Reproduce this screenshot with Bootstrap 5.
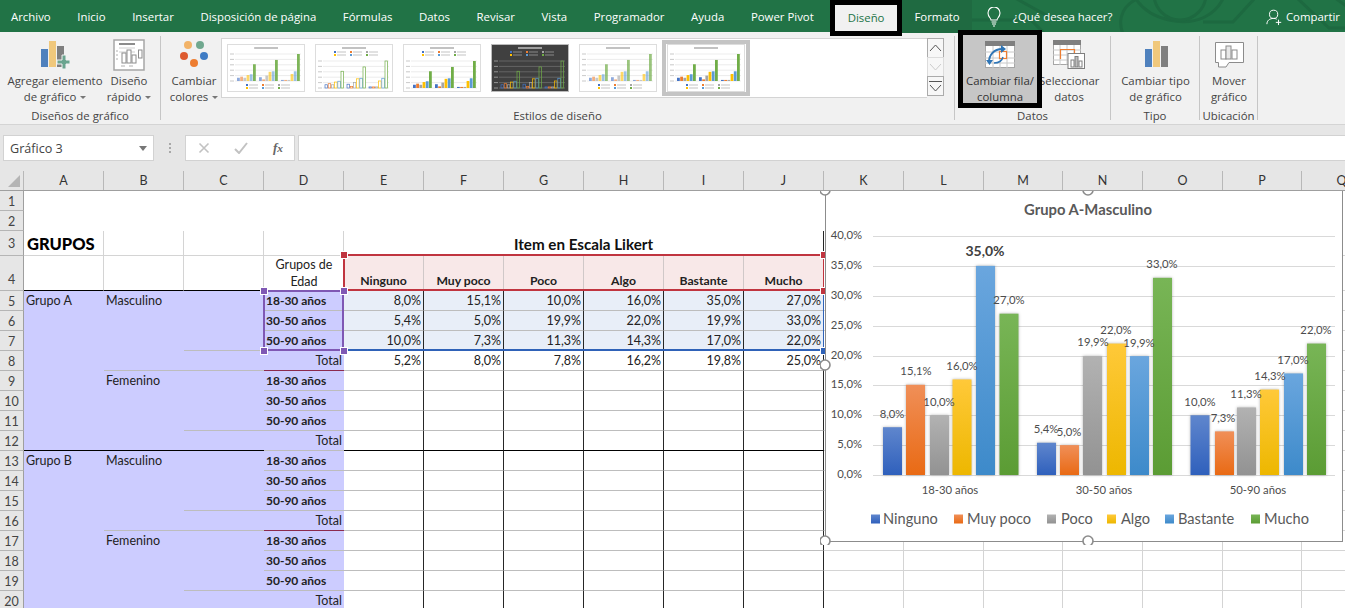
<!DOCTYPE html>
<html lang="es">
<head>
<meta charset="utf-8">
<title>Excel - Grupo A-Masculino</title>
<link rel="stylesheet" href="https://cdn.jsdelivr.net/npm/bootstrap@5.3.0/dist/css/bootstrap.min.css">
<style>
    html, body { height: 608px; overflow: hidden; background: #fff; }
    body { font-family: "Open Sans", "Liberation Sans", sans-serif; font-size: 11.4px; color: #333; }

    /* tabs */
    .xl-tabs { height: 32px; background: #217346; color: #fff; position: relative; padding-left: 0; }
    .xl-tabs > span { position: relative; }
    .xl-tab { padding: 0 13.3px; line-height: 33px; white-space: nowrap; }
    .xl-tab-first { padding-left: 11px; }
    .xl-tab-design { width: 72px; height: 36px; margin-left: 3px; border: 5px solid #000; background: #f1f1f1; color: #217346; text-align: center; line-height: 26px; z-index: 3; margin-bottom: -4px; align-self: flex-start; }
    .xl-tab-format { width: 70px; line-height: 33px; text-align: center; background: #1f6a41; }
    .xl-circuit { position: absolute; left: 895px; top: 0; }
    .xl-tell { margin-left: 15px; gap: 12px; line-height: 33px; }
    .xl-share { margin-left: auto; padding-right: 5px; gap: 3px; line-height: 33px; }

    /* ribbon */
    .xl-ribbon { height: 93px; background: #f1f1f1; border-bottom: 1px solid #d4d4d4; }
    .rb-group { height: 84px; margin-top: 4px; border-right: 1px solid #c6c6c6; flex: none; }
    .rb-items { height: 72px; }
    .rb-label { line-height: 16px; text-align: center; color: #444; white-space: nowrap; }
    .rb-btn { flex: none; text-align: center; line-height: 16px; color: #444; white-space: nowrap; }
    .rb-icon { height: 37px; display: flex; align-items: center; justify-content: center; }
    .rb-caret { display: inline-block; margin-left: 4px; vertical-align: 2px; border: 3px solid transparent; border-top-color: #777; border-bottom-width: 0; }
    .rb-g1 { width: 161px; } .rb-g2 { width: 794px; } .rb-g3 { width: 156px; } .rb-g4 { width: 89px; } .rb-g5 { width: 58px; }
    .rb-w-add { width: 100px; margin-left: 5px; }
    .rb-w-quick { width: 48px; }
    .rb-w-colors { width: 54px; margin-left: 6px; }
    .rb-active { width: 84px; height: 78px; margin: -6px 0 0 3px; border: 5px solid #000; background: #c6c6c6; padding-top: 1px; position: relative; z-index: 2; color: #333; overflow: hidden; }
    .rb-w-select { width: 60px; margin-left: -3px; }
    .rb-w-type { width: 89px; }
    .rb-w-move { width: 58px; }

    .rb-gallery { width: 706px; height: 60px; margin-top: 2px; background: #fff; border: 1px solid #d4d4d4; border-right: 0; padding: 5px 0 0 5px; gap: 10px; position: relative; }
    .rb-thumb { width: 78px; height: 48px; display: block; flex: none; }
    .rb-thumb-on { position: absolute; left: 440px; top: 1px; width: 88px; height: 56px; border: 4px solid #c4c4c4; background: #fff; padding: 0 1px; }
    .rb-spin { margin-top: 2px; width: 17px; }
    .rb-spin span { height: 20px; background: #f7f7f7; border: 1px solid #ababab; display: flex; align-items: center; justify-content: center; margin-bottom: -1px; }
    .rb-spin span.rb-off { border-color: #dcdcdc; }

    /* formula bar */
    .xl-formula { height: 46px; background: #e6e6e6; padding: 10px 0 0 3px; }
    .fx-name { width: 151px; height: 26px; background: #fff; border: 1px solid #d2d2d2; padding: 1px 6px 0; line-height: 24px; font-size: 12.6px; color: #444; }
    .fx-dots { width: 31px; gap: 2px; }
    .fx-dots i { width: 2px; height: 2px; background: #a8a8a8; display: block; }
    .fx-btns { width: 110px; height: 26px; background: #fff; border: 1px solid #d2d2d2; padding: 0 11px 0 12px; }
    .fx-fx { font-family: "Liberation Serif", serif; font-style: italic; font-weight: 700; font-size: 13px; color: #666; }
    .fx-input { margin-left: 3px; flex: 1; height: 26px; background: #fff; border: 1px solid #d2d2d2; border-right: 0; }

    /* sheet */
    .sh-head { height: 20px; background: #e6e6e6; border-bottom: 1px solid #9f9f9f; font-family: Lato, "Liberation Sans", sans-serif; font-size: 12.5px; color: #333; width: 1382px; }
    .sh-corner { width: 24px; flex: none; border-right: 1px solid #b8b8b8; position: relative; }
    .sh-corner i { position: absolute; left: 8px; top: 4px; border-style: solid; border-width: 0 0 12px 12px; border-color: transparent transparent #b5b5b5 transparent; }
    .sh-col { width: 80px; flex: none; text-align: center; border-right: 1px solid #b8b8b8; line-height: 19px; }
    .sh-narrow { width: 79px; }

    .sh-body { position: relative; height: 417px; overflow: hidden; font-family: Lato, "Liberation Sans", sans-serif; font-size: 12.5px; color: #222; }
    .sh-grid { table-layout: fixed; border-collapse: separate; border-spacing: 0; width: 1382px; }
    .sh-grid td { height: 20px; padding: 0 2px; white-space: nowrap; overflow: hidden; line-height: 16px; vertical-align: middle; }
    .sh-grid .sr3 td { height: 25px; }
    .sh-grid .sr4 td { height: 35px; vertical-align: bottom; }
    .sh-grid td.rw { background: #e6e6e6; border-right: 1px solid #9f9f9f; border-bottom: 1px solid #b5b5b5; text-align: center; color: #444; padding: 2px 0 0; line-height: 16px; }
    .sh-grid .sr4 td.rw { padding-bottom: 2px; }
    .c-g { border-right: 1px solid #d4d4d4; border-bottom: 1px solid #d4d4d4; }
    .c-gv { border-right: 1px solid #d4d4d4; }
    .c-bk { border-bottom: 1px solid #000; }
    .c-lil { background: #ccccff; }
    .c-line { border-bottom: 1px solid #bdbdbd; }
    .c-red { border-bottom: 1px solid #8c2a4e; }
    .c-num { text-align: right; border-right: 1px solid #262626; }
    .c-nl { border-bottom: 1px solid #bdbdbd; }
    .c-blue { background: #e8eef8; }
    .c-head { background: #f8e8e8; border-right: 1px solid #d0c8c8; text-align: center; font-weight: 700; font-size: 12.2px; padding-bottom: 2px !important; }
    .c-title { font-size: 15.2px; font-weight: 700; text-align: center; color: #111; border-right: 1px solid #262626; }
    .c-big { font-size: 16.5px; font-weight: 900; color: #000; line-height: 22px !important; padding: 1px 0 0 3px !important; }
    .c-wrap { white-space: normal !important; text-align: center; line-height: 17px !important; font-size: 12.5px; }
    .c-bold { font-weight: 700; font-size: 12px; }
    .c-right { text-align: right; }

    /* range markers and chart float over the cells */
    .rg { position: absolute; }
    .rg-red { left: 343px; top: 63px; width: 481px; height: 37px; border: 2px solid #c0343f; border-right-width: 1px; }
    .rg-blue { left: 343px; top: 99px; width: 481px; height: 61px; border-bottom: 2px solid #2f62b8; border-right: 1px solid #2f62b8; }
    .rg-purple { left: 263px; top: 99px; width: 81px; height: 61px; border: 2px solid #7f58b4; }
    .hd { position: absolute; width: 6px; height: 6px; outline: 1px solid #fff; }
    .hd-r { background: #c0343f; }
    .hd-b { background: #2f62b8; }
    .hd-p { background: #7f58b4; }
    .hd-1 { left: 341px; top: 61px; } .hd-2 { left: 821px; top: 61px; }
    .hd-3 { left: 821px; top: 97px; } .hd-4 { left: 341px; top: 97px; }
    .hd-5 { left: 261px; top: 97px; } .hd-6 { left: 261px; top: 157px; }
    .hd-7 { left: 341px; top: 157px; } .hd-8 { left: 821px; top: 157px; }
    .ch-box { position: absolute; left: 820px; top: -6px; display: block; }
    .ch-bar { filter: drop-shadow(0 0 1.5px rgba(0,0,0,.3)); }
    .ch-t { font-family: Lato, "Liberation Sans", sans-serif; font-size: 11.3px; fill: #4c4c4c; }
    .ch-title { font-size: 14.8px; font-weight: 700; fill: #595959; }
    .ch-big { font-size: 14px; font-weight: 700; fill: #404040; }
    .ch-leg { font-size: 14.6px; fill: #595959; }
</style>
</head>
<body>

<!-- Tabs -->
<div class="xl-tabs d-flex align-items-start">
    <svg class="xl-circuit" width="450" height="32" fill="none" stroke="#1d6940" stroke-width="3">
        <path d="M230 38c-8-14-5-30 10-38M330 -6c-8 22-30 32-56 26-18-4-30-14-36-26"/>
        <path d="M40-2l36 22h60l14 14M120 -2l40 22M360-2l-22 24h-30M402-2l32 30h20M440 -2l14 10"/>
        <circle cx="285" cy="-6" r="26"/>
    </svg>
    <span class="xl-tab xl-tab-first">Archivo</span>
    <span class="xl-tab">Inicio</span>
    <span class="xl-tab">Insertar</span>
    <span class="xl-tab">Disposición de página</span>
    <span class="xl-tab">Fórmulas</span>
    <span class="xl-tab">Datos</span>
    <span class="xl-tab">Revisar</span>
    <span class="xl-tab">Vista</span>
    <span class="xl-tab">Programador</span>
    <span class="xl-tab">Ayuda</span>
    <span class="xl-tab">Power Pivot</span>
    <span class="xl-tab-design">Diseño</span>
    <span class="xl-tab-format">Formato</span>
    <span class="xl-tell d-flex align-items-center">
        <svg width="14" height="20" viewBox="0 0 14 20" fill="none" stroke="#fff" stroke-width="1.1"><path d="M4 13c0-2-3-3-3-7a6 6 0 0 1 12 0c0 4-3 5-3 7z"/><path d="M4.5 15h5M5 17h4M6 19h2"/></svg>
        <span>¿Qué desea hacer?</span>
    </span>
    <span class="xl-share d-flex align-items-center">
        <svg width="17" height="18" viewBox="0 0 19 18" fill="none" stroke="#fff" stroke-width="1.1"><circle cx="8.5" cy="6" r="4.6"/><path d="M1 17c0-4 3-6.400 7.500-6.400 1.500 0 2.500.3 3.500.8M11 15h6M14 12v6"/></svg>
        <span>Compartir</span>
    </span>
</div>

<!-- Ribbon -->
<div class="xl-ribbon d-flex">
    <div class="rb-group rb-g1">
        <div class="rb-items d-flex">
            <div class="rb-btn rb-w-add">
                <div class="rb-icon">
                    <svg width="30" height="30" viewBox="0 0 30 30">
                        <rect x="1" y="9" width="7" height="18" fill="#4f81bd"/>
                        <rect x="9" y="1" width="7" height="26" fill="#f0c87c"/>
                        <rect x="17" y="6" width="7" height="21" fill="#7f7f7f"/>
                        <path d="M17 20h5v-5h4v5h4v4h-4v5h-4v-5h-5z" fill="#6ba48f" stroke="#f1f1f1"/>
                    </svg>
                </div>
                Agregar elemento<br>de gráfico<i class="rb-caret"></i>
            </div>
            <div class="rb-btn rb-w-quick">
                <div class="rb-icon">
                    <svg width="32" height="32" viewBox="0 0 32 32" fill="#fff" stroke="#8c8c8c">
                        <rect x="1" y="1" width="30" height="30" stroke="#a6a6a6" stroke-width="1.500"/>
                        <path d="M6 5h16" stroke="#8c8c8c" stroke-width="2"/>
                        <path d="M6 9h16M6 13h16" stroke="#cfcfcf"/>
                        <rect x="9" y="14" width="4" height="10"/><rect x="14" y="11" width="4" height="13"/><rect x="19" y="16" width="4" height="8"/>
                        <rect x="25.500" y="11" width="3.500" height="8"/>
                        <path d="M3 12h2M3 16h2M3 20h2M8 27h4M16 27h4" stroke="#b0b0b0"/>
                    </svg>
                </div>
                Diseño<br>rápido<i class="rb-caret"></i>
            </div>
        </div>
        <div class="rb-label">Diseños de gráfico</div>
    </div>

    <div class="rb-group rb-g2">
        <div class="rb-items d-flex">
            <div class="rb-btn rb-w-colors">
                <div class="rb-icon">
                    <svg width="30" height="30" viewBox="0 0 30 30">
                        <circle cx="9" cy="5" r="4" fill="#f2b368"/>
                        <circle cx="21" cy="5" r="4" fill="#70a88f"/>
                        <circle cx="5" cy="16" r="4" fill="#dd5a2f"/>
                        <circle cx="25" cy="16" r="4" fill="#3f7cc4"/>
                        <circle cx="15" cy="23" r="4" fill="#ed7d31"/>
                    </svg>
                </div>
                Cambiar<br>colores<i class="rb-caret"></i>
            </div>
            <div class="rb-gallery d-flex" id="gallery"></div>
            <div class="rb-spin d-flex flex-column">
                <span><svg width="13" height="8" fill="none" stroke="#555"><path d="M1 7l5.500-6 5.500 6"/></svg></span>
                <span class="rb-off"><svg width="13" height="8" fill="none" stroke="#ccc"><path d="M1 1l5.500 6 5.500-6"/></svg></span>
                <span><svg width="13" height="12" fill="none" stroke="#555"><path d="M0 1.500h13M1 5l5.500 6 5.500-6"/></svg></span>
            </div>
        </div>
        <div class="rb-label">Estilos de diseño</div>
    </div>

    <div class="rb-group rb-g3">
        <div class="rb-items d-flex">
            <div class="rb-btn rb-active">
                <div class="rb-icon">
                    <svg width="30" height="27" viewBox="0 0 30 27">
                        <rect x="0.500" y="0.500" width="29" height="26" fill="#fff" stroke="#a6a6a6"/>
                        <rect x="0" y="0" width="30" height="5" fill="#7f7f7f"/>
                        <path d="M0 11h30M0 17h30M0 22h30M8 5v22M15 5v22M22 5v22" stroke="#c8c8c8"/>
                        <rect x="14.500" y="10.500" width="7" height="7" fill="#fff" stroke="#ed7d31" stroke-width="1.200"/>
                        <path d="M4 21c0-7 5-13 13-13" fill="none" stroke="#2e75b6" stroke-width="2"/>
                        <path d="M16 4l5 4-5 4zM1 19h7l-3.500 5z" fill="#2e75b6"/>
                        <path d="M9 22c4 0 8-2 9-6" fill="none" stroke="#2e75b6" stroke-width="1.500"/>
                    </svg>
                </div>
                Cambiar fila/<br>columna
            </div>
            <div class="rb-btn rb-w-select">
                <div class="rb-icon">
                    <svg width="32" height="29" viewBox="0 0 32 29">
                        <rect x="0.500" y="0.500" width="27" height="24" fill="#fff" stroke="#a6a6a6"/>
                        <rect x="0" y="0" width="28" height="5" fill="#7f7f7f"/>
                        <path d="M0 10h28M0 15h28M0 20h28M7 5v20M14 5v20M21 5v20" stroke="#c8c8c8"/>
                        <path d="M7.500 19V9.500h14V14" fill="none" stroke="#ed7d31" stroke-width="1.200"/>
                        <rect x="15" y="13.500" width="16.500" height="15" fill="#fff" stroke="#7f7f7f"/>
                        <rect x="18" y="20" width="3" height="7" fill="#fff" stroke="#7f7f7f"/><rect x="22" y="16.500" width="3" height="10.500" fill="#bdbdbd" stroke="#7f7f7f"/><rect x="26" y="21" width="3" height="6" fill="#fff" stroke="#7f7f7f"/>
                    </svg>
                </div>
                Seleccionar<br>datos
            </div>
        </div>
        <div class="rb-label">Datos</div>
    </div>

    <div class="rb-group rb-g4">
        <div class="rb-items d-flex">
            <div class="rb-btn rb-w-type">
                <div class="rb-icon">
                    <svg width="24" height="27" viewBox="0 0 24 27">
                        <rect x="1" y="8" width="7" height="18" fill="#4f81bd"/>
                        <rect x="9" y="0" width="7" height="26" fill="#f0c87c"/>
                        <rect x="17" y="5" width="7" height="21" fill="#7f7f7f"/>
                    </svg>
                </div>
                Cambiar tipo<br>de gráfico
            </div>
        </div>
        <div class="rb-label">Tipo</div>
    </div>

    <div class="rb-group rb-g5">
        <div class="rb-items d-flex">
            <div class="rb-btn rb-w-move">
                <div class="rb-icon">
                    <svg width="29" height="26" viewBox="0 0 29 26" fill="#fff" stroke="#8c8c8c">
                        <path d="M.500.500h28v20H14l-3 4.500H3.500v-4.500H.500z"/>
                        <rect x="6" y="8" width="5" height="9"/><rect x="11" y="4" width="5" height="13" fill="#e8e8e8"/><rect x="17" y="8" width="5" height="9"/>
                    </svg>
                </div>
                Mover<br>gráfico
            </div>
        </div>
        <div class="rb-label">Ubicación</div>
    </div>
</div>

<!-- Formula bar -->
<div class="xl-formula d-flex align-items-start">
    <div class="fx-name d-flex justify-content-between align-items-center">
        <span>Gráfico 3</span>
        <svg width="8" height="5"><path d="M0 0h8L4 5z" fill="#777"/></svg>
    </div>
    <div class="fx-dots d-flex flex-column align-items-center justify-content-center mt-2"><i></i><i></i><i></i></div>
    <div class="fx-btns d-flex justify-content-between align-items-center">
        <svg width="12" height="12" fill="none" stroke="#c2c2c2" stroke-width="1.600"><path d="M1.500 1.500l9 9M10.500 1.500l-9 9"/></svg>
        <svg width="14" height="12" fill="none" stroke="#c2c2c2" stroke-width="2"><path d="M1 7l4 4 8-10"/></svg>
        <span class="fx-fx">f<small>x</small></span>
    </div>
    <div class="fx-input"></div>
</div>

<!-- Sheet -->
<div class="sh-head d-flex" id="colHead"><div class="sh-corner"><i></i></div></div>
<div class="sh-body">
    <table class="sh-grid" id="grid"></table>
    <div class="rg rg-blue"></div>
    <div class="rg rg-red"></div>
    <div class="rg rg-purple"></div>
    <i class="hd hd-r hd-1"></i><i class="hd hd-r hd-2"></i><i class="hd hd-r hd-3"></i><i class="hd hd-p hd-4"></i>
    <i class="hd hd-p hd-5"></i><i class="hd hd-p hd-6"></i><i class="hd hd-p hd-7"></i><i class="hd hd-b hd-8"></i>
    <svg class="ch-box" id="chart" width="525" height="360" viewBox="820 185 525 360"></svg>
</div>

<script src="https://cdn.jsdelivr.net/npm/bootstrap@5.3.0/dist/js/bootstrap.bundle.min.js"></script>
<script>
    const series = ['Ninguno', 'Muy poco', 'Poco', 'Algo', 'Bastante', 'Mucho'];
    const ages = ['18-30 años', '30-50 años', '50-90 años'];
    const values = [
        [8.0, 15.1, 10.0, 16.0, 35.0, 27.0],
        [5.4, 5.0, 19.9, 22.0, 19.9, 33.0],
        [10.0, 7.3, 11.3, 14.3, 17.0, 22.0]
    ];
    const totals = [5.2, 8.0, 7.8, 16.2, 19.8, 25.0];
    const pct = v => v.toFixed(1).replace('.', ',') + '%';

    // column headers
    const colHead = document.getElementById('colHead');
    'ABCDEFGHIJKLMNOPQ'.split('').forEach(c => {
        const d = document.createElement('div');
        d.className = 'sh-col' + (c === 'M' || c === 'P' ? ' sh-narrow' : '');
        d.textContent = c;
        colHead.appendChild(d);
    });

    // cells
    function dataCell(r, c) {
        let cls = '', txt = '';
        const age = (r - 5) % 4;
        if (c <= 3) {
            cls = 'c-lil';
            const blackLine = r === 12;
            if (c === 0) {
                if (r === 5) txt = 'Grupo A';
                if (r === 13) txt = 'Grupo B';
            }
            if (c === 1) {
                if (r === 5 || r === 13) txt = 'Masculino';
                if (r === 9 || r === 17) txt = 'Femenino';
                if (r === 8 || r === 16) cls += ' c-line';
            }
            if (c === 2 && age >= 2 && r !== 12) cls += ' c-line';
            if (c === 3) {
                if (age < 3) { txt = ages[age]; cls += ' c-bold c-line'; }
                else {
                    txt = 'Total';
                    cls += ' c-right ' + (r === 8 || r === 16 ? 'c-red' : 'c-line');
                }
            }
            if (blackLine) cls += ' c-bk';
        } else if (c <= 9) {
            cls = 'c-num ' + (r === 12 ? 'c-bk' : 'c-nl');
            if (r <= 7) { cls += ' c-blue'; txt = pct(values[r - 5][c - 4]); }
            if (r === 8) txt = pct(totals[c - 4]);
        } else {
            cls = 'c-g';
        }
        return `<td class="${cls}">${txt}</td>`;
    }

    let html = '<colgroup><col width="24">';
    for (let c = 0; c < 17; c++) html += `<col width="${c === 12 || c === 15 ? 79 : 80}">`;
    html += '</colgroup>';
    for (let r = 1; r <= 20; r++) {
        html += `<tr class="sr${r}"><td class="rw">${r}</td>`;
        if (r <= 2) {
            html += '<td colspan="10"></td>';
            for (let c = 10; c < 17; c++) html += '<td></td>';
        } else if (r === 3) {
            html += '<td class="c-g c-big">GRUPOS</td><td class="c-g"></td><td class="c-g"></td><td class="c-g"></td>';
            html += '<td class="c-title" colspan="6">Item en Escala Likert</td>';
            for (let c = 10; c < 17; c++) html += '<td class="c-g"></td>';
        } else if (r === 4) {
            html += '<td class="c-gv c-bk"></td><td class="c-gv c-bk"></td><td class="c-gv c-bk"></td><td class="c-wrap c-bk">Grupos de<br>Edad</td>';
            series.forEach(s => { html += `<td class="c-head">${s}</td>`; });
            for (let c = 10; c < 17; c++) html += '<td class="c-g"></td>';
        } else {
            for (let c = 0; c < 17; c++) html += dataCell(r, c);
        }
        html += '</tr>';
    }
    document.getElementById('grid').innerHTML = html;

    // main chart
    const colors = [['#5f86cd', '#2f60bc'], ['#f08f58', '#e96a14'], ['#b2b2b2', '#929292'], ['#ffc939', '#edb700'], ['#6aa6de', '#3d8aca'], ['#78b556', '#5b9c34']];
    const barX = [
        [883, 906, 930, 952.500, 976, 999.500],
        [1037, 1060, 1083, 1107, 1130, 1153],
        [1190.500, 1215, 1237, 1260, 1284, 1307]
    ];
    const labels = [
        [[892, 414], [916, 371], [939, 402], [962, 366], [985, 251], [1009, 300]],
        [[1046, 429], [1069, 432], [1093, 342], [1116, 330], [1139, 343], [1162, 264]],
        [[1200, 402], [1223, 418], [1246, 394], [1270, 376], [1293, 360], [1316, 330]]
    ];
    const legendPos = [[871, 883], [954, 967], [1047, 1061], [1107, 1121], [1165, 1178], [1251, 1264]];
    const y0 = 475, perPct = 5.975;

    let svg = '<defs>';
    colors.forEach((c, i) => {
        svg += `<linearGradient id="bar${i}" x1="0" y1="0" x2="0" y2="1"><stop offset="0" stop-color="${c[0]}"/><stop offset="1" stop-color="${c[1]}"/></linearGradient>`;
    });
    svg += '</defs>';
    svg += '<rect x="825.500" y="190.500" width="517" height="351" fill="#fff" stroke="#8c8c8c"/>';
    svg += '<text class="ch-t ch-title" x="1088" y="215" text-anchor="middle">Grupo A-Masculino</text>';
    for (let p = 0; p <= 8; p++) {
        const y = Math.round(y0 - p * 5 * perPct) + .5;
        svg += `<path d="M873 ${y}H1335" stroke="#d9d9d9"/>`;
        svg += `<text class="ch-t" x="862" y="${y + 2.500}" text-anchor="end">${pct(p * 5)}</text>`;
    }
    values.forEach((row, g) => {
        row.forEach((v, s) => {
            const h = v * perPct;
            svg += `<rect class="ch-bar" x="${barX[g][s]}" y="${y0 - h}" width="19" height="${h}" fill="url(#bar${s})"/>`;
        });
    });
    values.forEach((row, g) => {
        row.forEach((v, s) => {
            const [x, y] = labels[g][s];
            const big = g === 0 && s === 4;
            svg += `<text class="ch-t${big ? ' ch-big' : ''}" x="${x}" y="${y + (big ? 5 : 4)}" text-anchor="middle">${pct(v)}</text>`;
        });
    });
    ages.forEach((a, i) => {
        svg += `<text class="ch-t" x="${[950, 1104, 1258][i]}" y="494" text-anchor="middle">${a}</text>`;
    });
    series.forEach((s, i) => {
        svg += `<rect x="${legendPos[i][0]}" y="514.500" width="9" height="9" fill="url(#bar${i})"/>`;
        svg += `<text class="ch-t ch-leg" x="${legendPos[i][1]}" y="524">${s}</text>`;
    });
    [[825, 190], [1088, 190], [825, 365], [825, 541], [1088, 541]].forEach(p => {
        svg += `<circle cx="${p[0]}" cy="${p[1]}" r="5" fill="#fff" stroke="#8c8c8c" stroke-width="1.600"/>`;
    });
    document.getElementById('chart').innerHTML = svg;

    // gallery thumbnails
    const miniData = [[.12, .16, .12, .22, .25, .62], [.14, .06, .2, .34, .36, .78], [.04, .04, .04, .26, .36, 1]];
    const miniColors = ['#4472c4', '#ed7d31', '#a5a5a5', '#ffc000', '#5b9bd5', '#70ad47'];
    const thumbs = [
        { legendTop: false, fill: 'pale' },
        { legendTop: true, fill: 'outline' },
        { legendTop: true, fill: 'solid' },
        { legendTop: true, fill: 'outline', dark: true },
        { legendTop: false, fill: 'pale2' },
        { legendTop: false, fill: 'solid', on: true }
    ];
    function thumb(t) {
        const top = t.legendTop ? 17 : 10, base = t.legendTop ? 44 : 37;
        const ink = t.dark ? '#8a8a8a' : '#d8d8d8';
        let s = `<svg class="rb-thumb" viewBox="0 0 78 48"><rect x=".5" y=".5" width="77" height="47" fill="${t.dark ? '#404040' : '#fff'}" stroke="${t.dark ? '#bbb' : '#ddd'}"/>`;
        s += `<path d="M27 4h24" stroke="${t.dark ? '#ddd' : '#999'}" stroke-width="1.200"/>`;
        for (let i = 0; i < 6; i++) {
            const y = top + i * (base - top) / 5;
            s += `<path d="M8 ${y}H74" stroke="${ink}" stroke-width=".5"/>`;
            s += `<path d="M3 ${y}H7" stroke="${t.dark ? '#aaa' : '#bbb'}" stroke-width=".8"/>`;
        }
        const lgY = t.legendTop ? [8, 11] : [41, 44];
        lgY.forEach(y => {
            for (let i = 0; i < 3; i++) {
                s += `<rect x="${19 + i * 16}" y="${y - 1}" width="2" height="2" fill="${miniColors[(i + (y === lgY[0] ? 0 : 3))]}"/>`;
                s += `<path d="M${22 + i * 16} ${y}h9" stroke="#aaa" stroke-width=".7"/>`;
            }
        });
        miniData.forEach((row, g) => {
            row.forEach((v, i) => {
                const h = Math.max(v * (base - top), 1), x = 10 + g * 22 + i * 3.200, c = miniColors[i];
                if (t.fill === 'outline') {
                    s += `<rect x="${x}" y="${base - h}" width="2.500" height="${h}" fill="${t.dark ? 'none' : '#fff'}" stroke="${c}" stroke-width=".7"/>`;
                } else {
                    const op = t.fill === 'pale' ? (i === 5 ? .9 : .6) : t.fill === 'pale2' ? (i === 5 ? .7 : .6) : 1;
                    s += `<rect x="${x}" y="${base - h}" width="2.800" height="${h}" fill="${c}" opacity="${op}"/>`;
                }
            });
        });
        return s + '</svg>';
    }
    const gallery = document.getElementById('gallery');
    thumbs.forEach(t => {
        gallery.insertAdjacentHTML('beforeend', t.on ? `<div class="rb-thumb-on">${thumb(t)}</div>` : thumb(t));
    });
</script>
</body>
</html>
